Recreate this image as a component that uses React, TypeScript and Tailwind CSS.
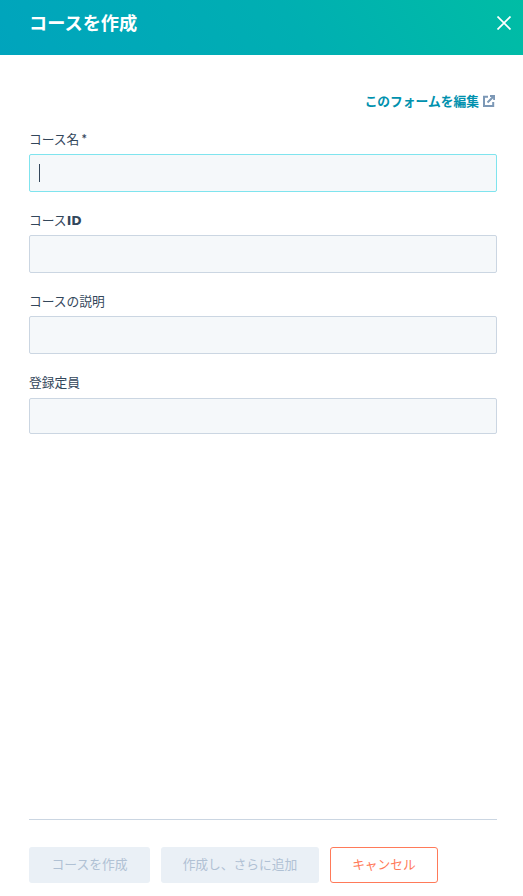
import React from "react";

const font = "font-['Lato','Noto_Sans_CJK_JP',sans-serif]";

function Field({ label, h = "h-[38px]", labelH = "h-[27px]", mb = "mb-[16px]", focus = false, required = false }: { label: React.ReactNode; h?: string; labelH?: string; mb?: string; focus?: boolean; required?: boolean }) {
  return (
    <div className={mb}>
      <div className={`${labelH} text-[12.75px] leading-[20px] text-[#33475b] pt-[2px]`}>
        {label}
        {required && <span className="ml-[2px] font-bold">*</span>}
      </div>
      <div
        className={`${h} w-full rounded-[2px] bg-[#f5f8fa] border flex items-center ${focus ? "border-[#7fe4ee]" : "border-[#cbd6e2]"}`}
      >
        {focus && <div className="ml-[9px] w-[1px] h-[18px] bg-[#33475b]" />}
      </div>
    </div>
  );
}

export default function App() {
  return (
    <div className={`${font} w-[523px] h-[896px] bg-white flex flex-col overflow-hidden`}>
      <header className="h-[55px] shrink-0 bg-[linear-gradient(57deg,#00a4bd,#00afb2_56%,#00bda5)] flex items-center justify-between pl-[29px] pr-[12px] pb-[9px]">
        <h1 className="text-[18.2px] font-bold text-white leading-[24px]">コースを作成</h1>
        <svg width="14" height="14" viewBox="0 0 14 14" fill="none" stroke="white" strokeWidth="1.7">
          <path d="M0.5 0.5L13.5 13.5M13.5 0.5L0.5 13.5" />
        </svg>
      </header>

      <main className="flex-1 flex flex-col pl-[29px] pr-[26px] min-h-0">
        <div className="flex justify-end items-center h-[20px] mt-[36px] mb-[16px] pr-[2px] gap-[4px]">
          <span className="text-[12.75px] font-bold text-[#0091ae] leading-[20px]">このフォームを編集</span>
          <svg width="12" height="12" viewBox="0 0 12 12" fill="none" stroke="#7c98b6" strokeWidth="2">
            <path d="M5 1.8H1v9.2h9.2V7" />
            <path d="M4.5 7.5L11 1M7 1h4.2V5" />
          </svg>
        </div>

        <Field label="コース名" required focus />
        <Field label={<>コース<span className="font-bold font-['DejaVu_Sans',sans-serif] text-[12.5px]">ID</span></>} />
        <Field label="コースの説明" />
        <Field label="登録定員" h="h-[36px]" labelH="h-[28px]" mb="mb-0" />

        <div className="flex-1" />

        <div className="h-[1px] bg-[#cbd6e2] mb-[27px]" />
        <div className="flex mb-[13px]">
          <div className="w-[121px] h-[36px] rounded-[3px] bg-[#eaf0f6] text-[#b0c1d4] text-[12.75px] flex items-center justify-center">コースを作成</div>
          <div className="ml-[11px] w-[158px] h-[36px] rounded-[3px] bg-[#eaf0f6] text-[#b0c1d4] text-[12.75px] flex items-center justify-center">作成し、さらに追加</div>
          <div className="ml-[11px] w-[108px] h-[36px] rounded-[3px] border border-[#ff7a59] text-[#ff7a59] text-[12.75px] flex items-center justify-center">キャンセル</div>
        </div>
      </main>
    </div>
  );
}
